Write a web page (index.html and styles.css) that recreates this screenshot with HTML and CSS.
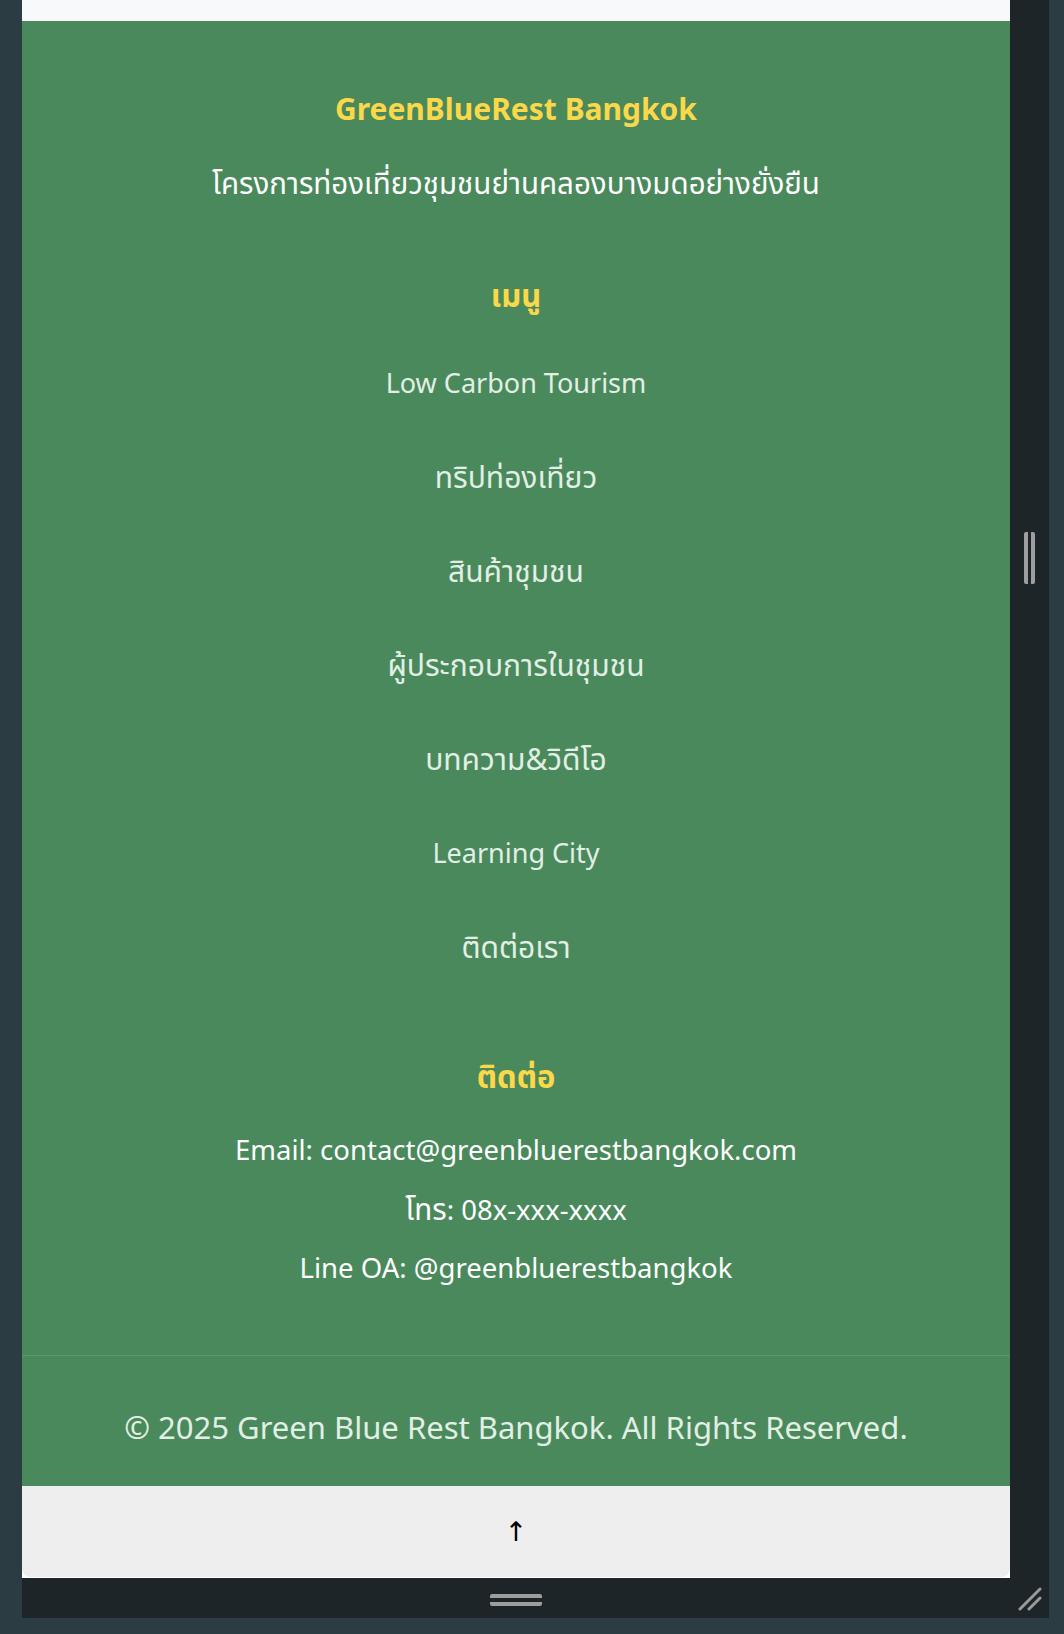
FILE: index.html
```html
<!DOCTYPE html>
<html lang="th">
<head>
<meta charset="utf-8">
<title>GreenBlueRest Bangkok</title>
<link rel="stylesheet" href="styles.css">
</head>
<body>
<div class="emulator">
  <div class="screen">
    <div class="page-top"></div>
    <footer class="site-footer">
      <div class="footer-main">
        <h2 class="brand">GreenBlueRest Bangkok</h2>
        <p class="tagline">โครงการท่องเที่ยวชุมชนย่านคลองบางมดอย่างยั่งยืน</p>

        <h3 class="section-title menu-title">เมนู</h3>
        <ul class="menu">
          <li><a href="#">Low Carbon Tourism</a></li>
          <li class="th"><a href="#">ทริปท่องเที่ยว</a></li>
          <li class="th"><a href="#">สินค้าชุมชน</a></li>
          <li class="th"><a href="#">ผู้ประกอบการในชุมชน</a></li>
          <li class="th"><a href="#">บทความ&amp;วิดีโอ</a></li>
          <li><a href="#">Learning City</a></li>
          <li class="th"><a href="#">ติดต่อเรา</a></li>
        </ul>

        <h3 class="section-title contact-title">ติดต่อ</h3>
        <ul class="contact">
          <li>Email: contact@greenbluerestbangkok.com</li>
          <li><span class="th-word">โทร</span>: 08x-xxx-xxxx</li>
          <li>Line OA: @greenbluerestbangkok</li>
        </ul>
      </div>
      <div class="footer-bottom">
        <p class="copyright">© 2025 Green Blue Rest Bangkok. All Rights Reserved.</p>
      </div>
    </footer>
    <button class="back-to-top" type="button">↑</button>
  </div>
  <div class="gutter-right">
    <span class="v-handle"></span>
  </div>
  <div class="gutter-bottom">
    <span class="h-handle"></span>
  </div>
  <div class="corner">
    <svg width="24" height="24" viewBox="0 0 24 24" class="grip">
      <line x1="2" y1="22" x2="22" y2="2" stroke="#9a9a9a" stroke-width="3" stroke-linecap="round"/>
      <line x1="11" y1="22" x2="22" y2="11" stroke="#9a9a9a" stroke-width="3" stroke-linecap="round"/>
    </svg>
  </div>
</div>
</body>
</html>
```

FILE: styles.css
```css
html, body {
  margin: 0;
  padding: 0;
}
body {
  background: #2b3d42;
  width: 1064px;
  height: 1634px;
  overflow: hidden;
  font-family: "Noto Sans", "Noto Sans Thai", "Noto Sans Thai UI", "Loma", "Garuda", "Kinnari", sans-serif;
}
.emulator {
  margin-left: 22px;
  width: 1027px;
  height: 1618px;
  background: #1e2528;
  display: grid;
  grid-template-columns: 988px 39px;
  grid-template-rows: 1578px 40px;
}
.screen {
  background: #ffffff;
  overflow: hidden;
  display: flex;
  flex-direction: column;
}
.page-top {
  height: 21px;
  background: #f8f9fa;
  flex: none;
}
.site-footer {
  background: #4a895c;
  color: #ffffff;
  text-align: center;
  flex: none;
}
.footer-main {
  padding: 68px 20px 0;
}
.brand {
  margin: 0;
  font-size: 30px;
  line-height: 40px;
  font-weight: 700;
  color: #fbd84a;
}
.tagline {
  margin: 34px 0 0;
  font-size: 29.5px;
  line-height: 40px;
  color: #ffffff;
}
.section-title {
  margin: 0;
  font-size: 31px;
  line-height: 40px;
  font-weight: 700;
  color: #fbd84a;
}
.menu-title {
  margin-top: 72px;
}
.menu {
  list-style: none;
  margin: 21px 0 0;
  padding: 0;
}
.menu li {
  padding: 27px 0;
  line-height: 40px;
  height: 40px;
  font-size: 27px;
}
.menu li.th {
  font-size: 30px;
}
.menu a {
  color: #e2efe5;
  text-decoration: none;
}
.contact-title {
  margin-top: 62px;
}
.contact {
  list-style: none;
  margin: 24px 0 0;
  padding: 0;
}
.contact li {
  line-height: 59px;
  height: 59px;
  font-size: 27.5px;
  color: #ffffff;
}
.th-word {
  font-size: 29.5px;
}
.footer-bottom {
  margin-top: 58px;
  border-top: 1px solid #5b9869;
  padding: 51px 20px 39px;
}
.copyright {
  margin: 0;
  font-size: 31px;
  line-height: 40px;
  color: #e2efe5;
}
.back-to-top {
  flex: none;
  height: 91px;
  width: 100%;
  border: none;
  margin: 0;
  padding: 0;
  background: #eeeeee;
  border-radius: 0 0 8px 8px;
  font-family: "DejaVu Sans", sans-serif;
  font-size: 27px;
  line-height: 91px;
  color: #000000;
}
.gutter-right {
  display: flex;
  justify-content: center;
  padding-top: 532px;
  box-sizing: border-box;
}
.v-handle {
  width: 11px;
  height: 52px;
  border-left: 4px solid #9e9e9e;
  border-right: 4px solid #9e9e9e;
  box-sizing: border-box;
  border-radius: 2px;
}
.gutter-bottom {
  display: flex;
  justify-content: center;
  align-items: center;
}
.h-handle {
  width: 52px;
  height: 12px;
  border-top: 4px solid #9e9e9e;
  border-bottom: 4px solid #9e9e9e;
  box-sizing: border-box;
  border-radius: 2px;
  margin-top: 3px;
}
.corner {
  display: flex;
  align-items: flex-end;
  justify-content: flex-end;
  padding: 0 7px 7px 0;
}
```
